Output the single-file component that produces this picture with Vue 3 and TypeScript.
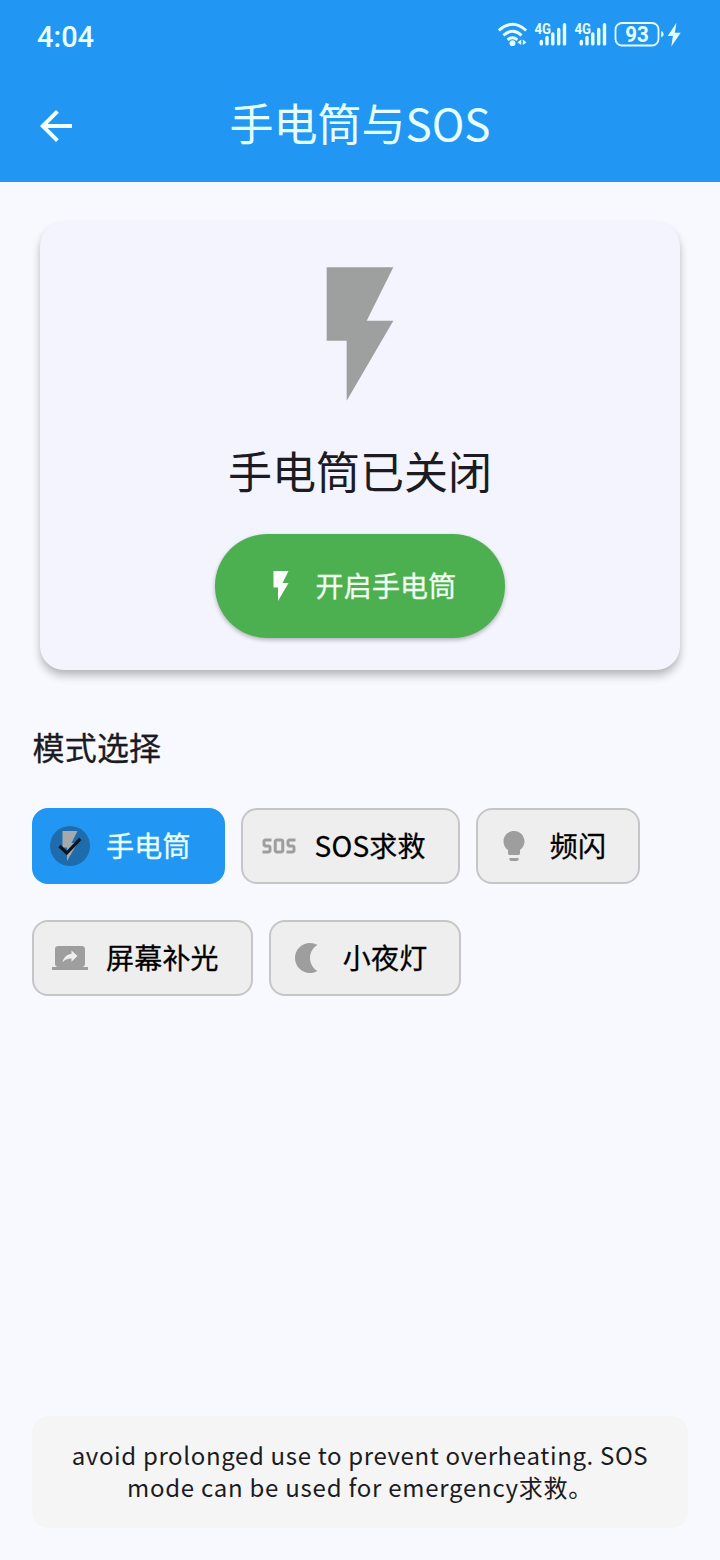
<script setup lang="ts">
import { ref } from 'vue'

type ModeId = 'torch' | 'sos' | 'strobe' | 'screen' | 'night'

interface Mode {
  id: ModeId
  label: string
  icon: string
}

const FLASH = 'M7 2v11h3v9l7-12h-4l4-8z'

const modes: Mode[] = [
  { id: 'torch', label: '手电筒', icon: FLASH },
  {
    id: 'sos',
    label: 'SOS求救',
    icon: 'M13.5 7h-3c-1.1 0-2 .9-2 2v6c0 1.1.9 2 2 2h3c1.1 0 2-.9 2-2V9c0-1.1-.9-2-2-2zm0 8h-3V9h3v6zM1 15h4v-2H3c-1.1 0-2-.9-2-2V9c0-1.1.9-2 2-2h4v2H3v2h2c1.1 0 2 .9 2 2v2c0 1.1-.9 2-2 2H1v-2zM17 15h4v-2h-2c-1.1 0-2-.9-2-2V9c0-1.1.9-2 2-2h4v2h-4v2h2c1.1 0 2 .9 2 2v2c0 1.1-.9 2-2 2h-4v-2z',
  },
  {
    id: 'strobe',
    label: '频闪',
    icon: 'M9 21c0 .5.4 1 1 1h4c.6 0 1-.5 1-1v-1H9v1zm3-19C8.1 2 5 5.1 5 9c0 2.4 1.2 4.5 3 5.7V17c0 .5.4 1 1 1h6c.6 0 1-.5 1-1v-2.3c1.8-1.3 3-3.4 3-5.7 0-3.9-3.1-7-7-7z',
  },
  {
    id: 'screen',
    label: '屏幕补光',
    icon: 'M20 18c1.1 0 1.99-.9 1.99-2L22 6c0-1.11-.9-2-2-2H4c-1.11 0-2 .89-2 2v10c0 1.1.89 2 2 2H0v2h24v-2h-4zm-7-3.53v-2.19c-2.78 0-4.61.85-6 2.72.56-2.67 2.11-5.33 6-5.87V7l4 3.73-4 3.74z',
  },
  {
    id: 'night',
    label: '小夜灯',
    icon: 'M14 2c1.82 0 3.53.5 5 1.35C16.01 5.08 14 8.3 14 12s2.01 6.92 5 8.65C17.53 21.5 15.82 22 14 22 8.48 22 4 17.52 4 12S8.48 2 14 2z',
  },
]

const selected = ref<ModeId>('torch')
const isOn = ref(false)
</script>

<template>
  <div class="screen">
    <header class="top">
      <div class="status">
        <span class="time">4:04</span>
        <svg class="indicators" width="186" height="32" viewBox="0 0 186 32">
          <g fill="none" stroke="currentColor" stroke-width="2.9">
            <path d="M.8 11.5Q14.5 -.8 28.2 11.5" />
            <path d="M5.4 16.3Q14.5 8.3 23.6 16.3" />
            <path d="M9.6 20.8Q14.5 16.8 19.4 20.8" />
          </g>
          <circle cx="14.5" cy="24.2" r="2.9" fill="currentColor" />
          <path d="M23.2 20.5v5.4l-3.6-2.7zM24.8 20.5v5.4l3.6-2.7z" fill="currentColor" />
          <g v-for="x in [37, 77]" :key="x" :transform="`translate(${x} 0)`">
            <text class="net" x="-.5" y="15" textLength="16.5" lengthAdjust="spacingAndGlyphs">4G</text>
            <path
              d="M6.3 22.5v2.4M12 18.5v6.4M17.8 15v9.9M23.7 10.5v14.4M29.5 5.8v19.1"
              stroke="currentColor"
              stroke-width="3.4"
              stroke-linecap="round"
            />
          </g>
          <rect x="117.5" y="4" width="43" height="22.5" rx="6.5" fill="none" stroke="currentColor" stroke-width="1.8" />
          <text class="level" x="127.3" y="23" textLength="23.5" lengthAdjust="spacingAndGlyphs">93</text>
          <path d="M163.2 12q2.4.6 2.4 3.3t-2.4 3.3z" fill="currentColor" />
          <path d="M178.5 3.8l-8.8 13.2h5.2l-1.6 10.5 9.4-13.8h-5.9z" fill="currentColor" />
        </svg>
      </div>
      <div class="appbar">
        <svg class="back" viewBox="0 0 24 24"><path d="M20 11H7.83l5.59-5.59L12 4l-8 8 8 8 1.41-1.41L7.83 13H20v-2z" /></svg>
        <h1>手电筒与SOS</h1>
      </div>
    </header>

    <main class="content">
      <section class="card">
        <svg class="bolt" viewBox="0 0 24 24"><path :d="FLASH" /></svg>
        <p class="state">{{ isOn ? '手电筒已开启' : '手电筒已关闭' }}</p>
        <button class="toggle" type="button" @click="isOn = !isOn">
          <svg viewBox="0 0 24 24"><path :d="FLASH" /></svg>
          <span class="label">{{ isOn ? '关闭手电筒' : '开启手电筒' }}</span>
        </button>
      </section>

      <h2>模式选择</h2>
      <div class="modes">
        <button
          v-for="mode in modes"
          :key="mode.id"
          type="button"
          class="chip"
          :class="{ active: mode.id === selected }"
          @click="selected = mode.id"
        >
          <span class="avatar">
            <svg class="glyph" viewBox="0 0 24 24"><path :d="mode.icon" /></svg>
            <svg v-if="mode.id === selected" class="check" viewBox="0 0 40 40"><path d="M9.5 20l7.2 7L30.3 12.8" /></svg>
          </span>
          <span class="label">{{ mode.label }}</span>
        </button>
      </div>
    </main>

    <footer class="note">
      <span class="line first">avoid prolonged use to prevent overheating. SOS</span>
      <span class="line">mode can be used for emergency求救。</span>
    </footer>
  </div>
</template>

<style>
body {
  background: #f8f9fe;
}
</style>

<style scoped>
.screen {
  box-sizing: border-box;
  width: 720px;
  height: 1560px;
  display: flex;
  flex-direction: column;
  background: #f8f9fe;
  color: #1b1b21;
  font-family: 'Noto Sans CJK SC', 'Noto Sans', sans-serif;
}
.top {
  height: 182px;
  background: #2196f3;
  color: #e6ffff;
}
.status {
  height: 70px;
  padding: 0 36px 0 37px;
  display: flex;
  align-items: center;
  justify-content: space-between;
}
.time {
  font: 500 29px/34px Roboto, sans-serif;
  padding-top: 4px;
}
.indicators {
  display: block;
}
.net {
  font: 700 15.5px Roboto, sans-serif;
  fill: currentColor;
}
.level {
  font: 700 21.5px Roboto, sans-serif;
  fill: currentColor;
}
.appbar {
  height: 112px;
  padding: 0 32px;
  display: grid;
  grid-template-columns: 48px 1fr 48px;
  align-items: center;
}
.back {
  width: 48px;
  height: 48px;
  fill: #f2ffff;
}
h1 {
  margin: 0;
  padding-bottom: 9px;
  text-align: center;
  font-size: 44px;
  line-height: 56px;
  font-weight: 400;
}
.content {
  flex: 1;
  padding: 40px 32px 0;
}
.card {
  margin: 0 8px;
  height: 448px;
  box-sizing: border-box;
  padding: 32px 0;
  display: flex;
  flex-direction: column;
  align-items: center;
  border-radius: 24px;
  background: #f3f4fd;
  box-shadow: 0 6px 8px rgba(0, 0, 0, 0.24), 0 2px 4px rgba(0, 0, 0, 0.04);
}
.bolt {
  width: 160px;
  height: 160px;
  fill: #9e9f9f;
}
.state {
  margin: 26px 0 34px;
  font-size: 44px;
  line-height: 60px;
}
.toggle {
  height: 104px;
  padding: 0 48px;
  display: flex;
  align-items: center;
  gap: 16px;
  border: 0;
  border-radius: 52px;
  background: #4caf50;
  color: #f1fff1;
  font: 400 28px/40px 'Noto Sans CJK SC', sans-serif;
  box-shadow: 0 2px 4px rgba(0, 0, 0, 0.28);
}
.label {
  padding-bottom: 2px;
  letter-spacing: 0.2px;
  -webkit-text-stroke: 0.3px currentColor;
}
.toggle svg {
  width: 36px;
  height: 36px;
  fill: #fff;
}
h2 {
  margin: 52px 0 38px;
  padding-left: 0.5px;
  font-size: 32px;
  line-height: 48px;
  font-weight: 400;
  letter-spacing: 0.2px;
  -webkit-text-stroke: 0.3px currentColor;
}
.modes {
  display: flex;
  flex-wrap: wrap;
  gap: 36px 16px;
}
.chip {
  height: 76px;
  box-sizing: border-box;
  padding: 0 32px 0 16px;
  display: flex;
  align-items: center;
  gap: 16px;
  border: 2px solid #c6c6ca;
  border-radius: 16px;
  background: #eee;
  color: #000;
  font: 400 28px/40px 'Noto Sans CJK SC', sans-serif;
  white-space: nowrap;
}
.chip.active {
  border-color: #2196f3;
  background: #2196f3;
  color: #e8ffff;
}
.avatar {
  width: 40px;
  height: 40px;
  display: grid;
  place-items: center;
  border-radius: 50%;
}
.avatar > svg {
  grid-area: 1 / 1;
}
.active .avatar {
  background: #1e6cab;
}
.glyph {
  width: 36px;
  height: 36px;
  fill: #9e9e9e;
}
.active .glyph {
  fill: #a3a9ac;
}
.check {
  width: 40px;
  height: 40px;
  fill: none;
  stroke: #0b1320;
  stroke-width: 3.2;
}
.note {
  margin: 0 32px 32px;
  padding: 23px 24px 25px;
  display: flex;
  flex-direction: column;
  align-items: center;
  border-radius: 16px;
  background: #f5f5f5;
  font-size: 24px;
  line-height: 32px;
  letter-spacing: 0.75px;
}
.line {
  white-space: nowrap;
}
.first {
  letter-spacing: 0.65px;
}
</style>
